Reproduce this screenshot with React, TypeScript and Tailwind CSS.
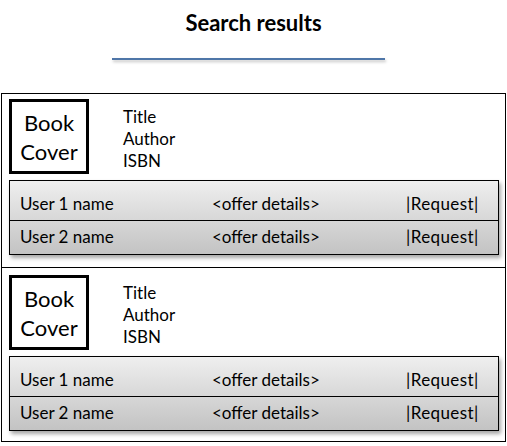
import React from "react";

type Offer = {
  user: string;
};

const offers: Offer[] = [{ user: "User 1 name" }, { user: "User 2 name" }];

const ResultCard = ({ last }: { last?: boolean }) => {
  return (
    <div
      className={`border border-black ${last ? "border-t-0 h-[174px] pt-[7px]" : "h-[175px] pt-[5px]"}`}
    >
      {/* cover + details */}
      <div className="flex">
        <div className="ml-[7px] w-[80px] h-[75px] border-[3px] border-black flex flex-col items-center justify-center text-[22px] leading-[29px]">
          <span>Book</span>
          <span>Cover</span>
        </div>
        <div className="ml-[34px] text-[17px] leading-[22px] mt-[7px]">
          <div>Title</div>
          <div>Author</div>
          <div>ISBN</div>
        </div>
      </div>

      {/* offers table */}
      <div className="ml-[7px] mt-[6px] w-[490px] border border-black bg-gradient-to-b from-[#efefef] to-[#c3c3c3] shadow-[2px_3px_4px_rgba(0,0,0,0.35)] text-[17px]">
        {offers.map((o, i) => (
          <div
            key={o.user}
            className={`grid grid-cols-[192px_194px_1fr] pl-[10px] items-center ${
              i === 0 ? "h-[40px] pt-[6px] border-b border-black" : "h-[33px] pb-[2px]"
            }`}
          >
            <span>{o.user}</span>
            <span>&lt;offer details&gt;</span>
            <span className="tracking-[0.4px]">|Request|</span>
          </div>
        ))}
      </div>
    </div>
  );
};

const App = () => {
  return (
    <div
      className="w-[507px] h-[446px] bg-white text-black overflow-hidden"
      style={{ fontFamily: "Lato, 'Open Sans', sans-serif" }}
    >
      <h1 className="text-center text-[22px] font-bold pt-[9px] leading-[28px]">
        Search results
      </h1>
      <div className="mt-[21px] ml-[112px] w-[273px] h-[2px] bg-[#4f76a8] shadow-[1px_2px_3px_rgba(0,0,0,0.25)]" />

      <div className="mt-[33px] ml-[1px] w-[505px]">
        <ResultCard />
        <ResultCard last />
      </div>
    </div>
  );
};

export default App;
